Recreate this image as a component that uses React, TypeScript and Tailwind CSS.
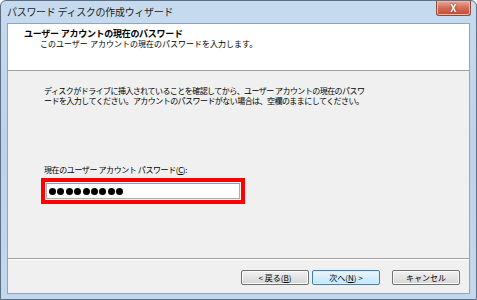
import type { ReactNode } from "react"

const font = { fontFamily: '"Noto Sans CJK JP", "Noto Sans", sans-serif' }
// Latin primary font keeps the tight header lines from overlapping
const headerFont = { fontFamily: '"Liberation Sans", "Noto Sans CJK JP", sans-serif' }

const WizardButton = ({ children, primary }: { children: ReactNode; primary?: boolean }) => (
  <button
    className={
      primary
        ? "flex h-[15px] w-[68px] items-center justify-center rounded-[2px] border border-[#3c7fb1] bg-gradient-to-b from-[#eaf6fd] to-[#bee6fd] text-[8px] leading-none text-black shadow-[inset_0_0_0_1px_#d9f0fc]"
        : "flex h-[15px] w-[68px] items-center justify-center rounded-[2px] border border-[#707070] bg-gradient-to-b from-[#f2f2f2] to-[#d5d5d5] text-[8px] leading-none text-black shadow-[inset_0_0_0_1px_#fafafa]"
    }
  >
    {children}
  </button>
)

export default function App() {
  return (
    <div
      style={font}
      className="flex h-[300px] w-[477px] flex-col overflow-hidden rounded-t-[6px] border border-[#5c6f86] bg-gradient-to-b from-[#c7dbef] via-[#bcd2ea] to-[#c4d8ed]"
    >
      {/* title bar */}
      <div className="flex h-[22px] shrink-0 items-start justify-between pl-[6px]">
        <span className="mt-[5px] text-[10px] leading-[12px] tracking-[-0.3px] text-[#1e1e1e]">
          パスワード ディスクの作成ウィザード
        </span>
        <div className="mr-[5px] flex h-[15px] w-[35px] items-center justify-center rounded-b-[3px] border border-t-0 border-[#8a4a3c] bg-gradient-to-b from-[#e8aa9c] via-[#d46a55] to-[#c44a34] shadow-[inset_0_0_0_1px_#ecb8ab]">
          <span className="text-[10px] font-bold leading-none text-white [text-shadow:0_0_2px_#6b1a0e]">X</span>
        </div>
      </div>

      {/* client area */}
      <div className="mx-[6px] mb-[5px] flex flex-1 flex-col border border-[#8ea6c1] bg-[#f0f0f0]">
        <div style={headerFont} className="h-[47px] shrink-0 border-b border-[#a0a0a0] bg-white pl-[16px] pt-[5px]">
          <p className="text-[9px] font-bold leading-[11px] tracking-[-0.3px] text-black">
            ユーザー アカウントの現在のパスワード
          </p>
          <p className="pl-[16px] text-[8px] leading-[10px] tracking-[0px] text-black">
            このユーザー アカウントの現在のパスワードを入力します。
          </p>
        </div>

        <div className="flex-1 pl-[36px] pt-[15px]">
          <p className="text-[8px] leading-[10px] tracking-[-0.55px] text-black">
            ディスクがドライブに挿入されていることを確認してから、ユーザー アカウントの現在のパスワ
            <br />
            ードを入力してください。アカウントのパスワードがない場合は、空欄のままにしてください。
          </p>

          <p className="mt-[59px] text-[8px] leading-[10px] tracking-[-0.4px] text-black">
            現在のユーザー アカウント パスワード(<span className="underline">C</span>):
          </p>
          <div className="-ml-[3px] mt-[3px] w-[204px] border-[4px] border-[#ff0000] bg-[#f0f0f0] p-px">
            <div className="flex h-[16px] items-center gap-[1.4px] border border-[#abadb3] border-t-[#7fa3c4] bg-white pl-[2px]">
              {Array.from({ length: 9 }).map((_, i) => (
                <span key={i} className="size-[7px] rounded-full bg-black" />
              ))}
            </div>
          </div>
        </div>

        <div className="h-[35px] shrink-0 border-t border-[#a0a0a0] shadow-[inset_0_1px_0_#ffffff]">
          <div className="flex items-center justify-end pr-[9px] pt-[11px]">
            <div className="flex gap-[3px]">
              <WizardButton>
                &lt; 戻る(<span className="underline">B</span>)
              </WizardButton>
              <WizardButton primary>
                次へ(<span className="underline">N</span>) &gt;
              </WizardButton>
            </div>
            <div className="ml-[12px]">
              <WizardButton>キャンセル</WizardButton>
            </div>
          </div>
        </div>
      </div>
    </div>
  )
}
